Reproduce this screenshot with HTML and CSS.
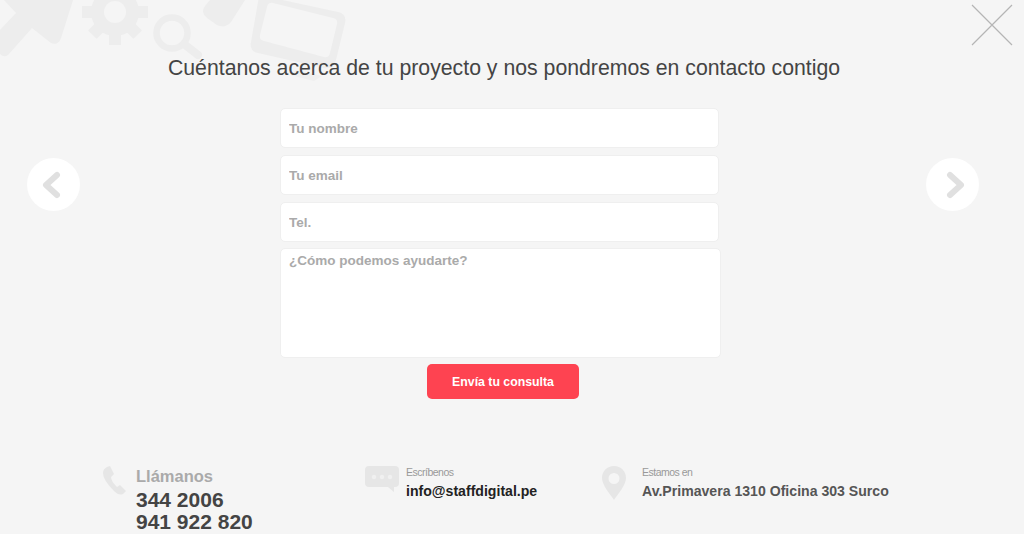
FILE: index.html
```html
<!DOCTYPE html>
<html lang="en">
  <head>
    <meta charset="UTF-8" />
    <meta name="viewport" content="width=device-width, initial-scale=1.0" />
    <title>Contacto</title>
    <link rel="stylesheet" href="styles.css">
  </head>
  <body>
    <svg class="bg-icons" width="360" height="90" viewBox="0 0 360 90">
      <!-- arrow -->
      <path d="M4 0H73L61 38Q58 46 51 43L32 28L8 55Q4 58 0 54V30L16 13Z" fill="#ededed"/>
      <!-- gear -->
      <g fill="#ededed">
        <circle cx="115" cy="12" r="24"/>
        <rect x="109" y="-21" width="12" height="66"/>
        <rect x="82" y="6" width="66" height="12"/>
        <rect x="109" y="-20" width="12" height="64" transform="rotate(45 115 12)"/>
        <rect x="109" y="-20" width="12" height="64" transform="rotate(-45 115 12)"/>
      </g>
      <circle cx="115" cy="12" r="11" fill="#f5f5f5"/>
      <!-- magnifier -->
      <circle cx="172" cy="33" r="15.5" fill="none" stroke="#ededed" stroke-width="6.5"/>
      <path d="M184 44L198 55" stroke="#ededed" stroke-width="8" stroke-linecap="round"/>
      <!-- pencil tip -->
      <path d="M210 0H245L231 22Q225 29 217 25L207 18Q200 12 205 6Z" fill="#ededed"/>
      <!-- screen -->
      <path d="M296 70L322 76L314 81L290 75Z" fill="#efefef"/>
      <path fill-rule="evenodd" fill="#ededed" d="M264 -4L338 12Q347 14 345 23L336 60Q334 70 324 68L258 53Q249 51 251 42L258 2Q259 -5 264 -4ZM273 3Q268 2 267 7L260 35Q259 40 264 41L324 57Q329 58 330 53L337 24Q338 19 333 18Z"/>
    </svg>

    <a class="close" href="#" aria-label="Cerrar">
      <svg width="42" height="42" viewBox="0 0 42 42">
        <path d="M1 1L41 41M41 1L1 41" stroke="#b5b5b5" stroke-width="1.2" fill="none"/>
      </svg>
    </a>

    <a class="nav nav-prev" href="#" aria-label="Anterior">
      <svg width="20" height="28" viewBox="0 0 20 28">
        <path d="M16 4L5 14L16 24" stroke="#e0e0e0" stroke-width="6" stroke-linecap="round" stroke-linejoin="round" fill="none"/>
      </svg>
    </a>
    <a class="nav nav-next" href="#" aria-label="Siguiente">
      <svg width="20" height="28" viewBox="0 0 20 28">
        <path d="M4 4L15 14L4 24" stroke="#e0e0e0" stroke-width="6" stroke-linecap="round" stroke-linejoin="round" fill="none"/>
      </svg>
    </a>

    <main class="page">
      <h2 class="title">Cuéntanos acerca de tu proyecto y nos pondremos en contacto contigo</h2>

      <form class="contact-form">
        <input class="field" type="text" placeholder="Tu nombre" />
        <input class="field" type="email" placeholder="Tu email" />
        <input class="field" type="text" placeholder="Tel." />
        <textarea class="field field-area" placeholder="¿Cómo podemos ayudarte?"></textarea>
        <button class="send" type="button">Envía tu consulta</button>
      </form>

      <section class="info">
        <div class="info-item info-phone">
          <svg class="info-icon" width="24" height="30" viewBox="0 0 24 30">
            <path d="M5 1L8 0L12 8L9 11Q9 15 15 21L18 19L24 25L21 28Q17 30 12 25Q1 14 1 7Q1 3 5 1Z" fill="#e6e6e6"/>
          </svg>
          <div>
            <div class="call-label">Llámanos</div>
            <div class="call-number">344 2006</div>
            <div class="call-number">941 922 820</div>
          </div>
        </div>
        <div class="info-item info-mail">
          <svg class="info-icon" width="34" height="26" viewBox="0 0 34 26">
            <path d="M4 0H30Q34 0 34 4V17Q34 21 30 21H29V26L23 21H4Q0 21 0 17V4Q0 0 4 0Z" fill="#e6e6e6"/>
            <circle cx="9" cy="11" r="2.2" fill="#f0f0f0"/>
            <circle cx="17" cy="11" r="2.2" fill="#f0f0f0"/>
            <circle cx="25" cy="11" r="2.2" fill="#f0f0f0"/>
          </svg>
          <div>
            <div class="small-label">Escríbenos</div>
            <div class="mail">info@staffdigital.pe</div>
          </div>
        </div>
        <div class="info-item info-place">
          <svg class="info-icon" width="24" height="34" viewBox="0 0 24 34">
            <path fill-rule="evenodd" d="M12 0C5 0 0 5 0 12C0 19 8 28 12 34C16 28 24 19 24 12C24 5 19 0 12 0ZM12 7A5.5 5.5 0 1 1 12 18A5.5 5.5 0 1 1 12 7Z" fill="#e6e6e6"/>
          </svg>
          <div>
            <div class="small-label">Estamos en</div>
            <div class="address">Av.Primavera 1310 Oficina 303 Surco</div>
          </div>
        </div>
      </section>
    </main>
  </body>
</html>
```

FILE: styles.css
```css
html,
body {
  height: 534px;
  overflow: hidden;
}

body {
  font-family: "Liberation Sans", Arial, sans-serif;
  background-color: #f5f5f5;
  margin: 0;
  padding: 0;
  color: #444;
}

.bg-icons {
  position: absolute;
  top: 0;
  left: 0;
}

.close {
  position: absolute;
  top: 4px;
  left: 971px;
  line-height: 0;
}

.nav {
  position: absolute;
  top: 158px;
  width: 53px;
  height: 53px;
  box-sizing: border-box;
  border-radius: 50%;
  background-color: #fff;
  display: flex;
  align-items: center;
  justify-content: center;
}

.nav-prev {
  left: 27px;
  padding-right: 5px;
}

.nav-next {
  left: 926px;
  padding-left: 7px;
}

.page {
  position: relative;
  display: flex;
  flex-direction: column;
}

.title {
  margin: 56px 0 0;
  padding-right: 16px;
  height: 52px;
  text-align: center;
  font-size: 21.25px;
  line-height: 25px;
  font-weight: normal;
  color: #444;
}

.contact-form {
  display: flex;
  flex-direction: column;
  align-items: flex-start;
  margin-left: 280px;
}

.field {
  width: 439px;
  height: 39.5px;
  box-sizing: border-box;
  margin-bottom: 7.5px;
  padding: 1px 8px 0;
  border: 1px solid #efefef;
  border-radius: 5px;
  background-color: #fff;
  font-family: "Liberation Sans", Arial, sans-serif;
  font-size: 13.5px;
  font-weight: bold;
  color: #444;
  outline: none;
}

.field::placeholder {
  color: #aaa;
  opacity: 1;
}

.field-area {
  width: 441px;
  height: 110px;
  margin-top: -1px;
  margin-bottom: 6px;
  padding: 4px 8px;
  resize: none;
  display: block;
}

.send {
  margin-left: 147px;
  width: 152px;
  height: 35px;
  border: none;
  border-radius: 5px;
  background-color: #fe4351;
  color: #fff;
  font-family: "Liberation Sans", Arial, sans-serif;
  font-size: 12.3px;
  font-weight: bold;
}

.info {
  display: flex;
  margin-top: 66px;
  padding-left: 102px;
}

.info-item {
  display: flex;
}

.info-phone {
  width: 263px;
  gap: 10px;
}

.info-mail {
  width: 237px;
  gap: 7px;
}

.info-place {
  gap: 16px;
}

.info-icon {
  flex-shrink: 0;
  margin-top: 1px;
}

.call-label {
  font-size: 16.5px;
  font-weight: bold;
  line-height: 20px;
  color: #aaa;
  margin-top: 1px;
  margin-bottom: 3px;
}

.call-number {
  font-size: 21px;
  font-weight: bold;
  line-height: 22px;
  color: #444;
}

.small-label {
  font-size: 10.5px;
  line-height: 13px;
  letter-spacing: -0.5px;
  color: #999;
  margin-top: 1px;
  margin-bottom: 4px;
}

.mail {
  font-size: 14.1px;
  font-weight: bold;
  line-height: 16px;
  color: #222;
}

.address {
  font-size: 14.1px;
  font-weight: bold;
  line-height: 16px;
  color: #555;
}
```
